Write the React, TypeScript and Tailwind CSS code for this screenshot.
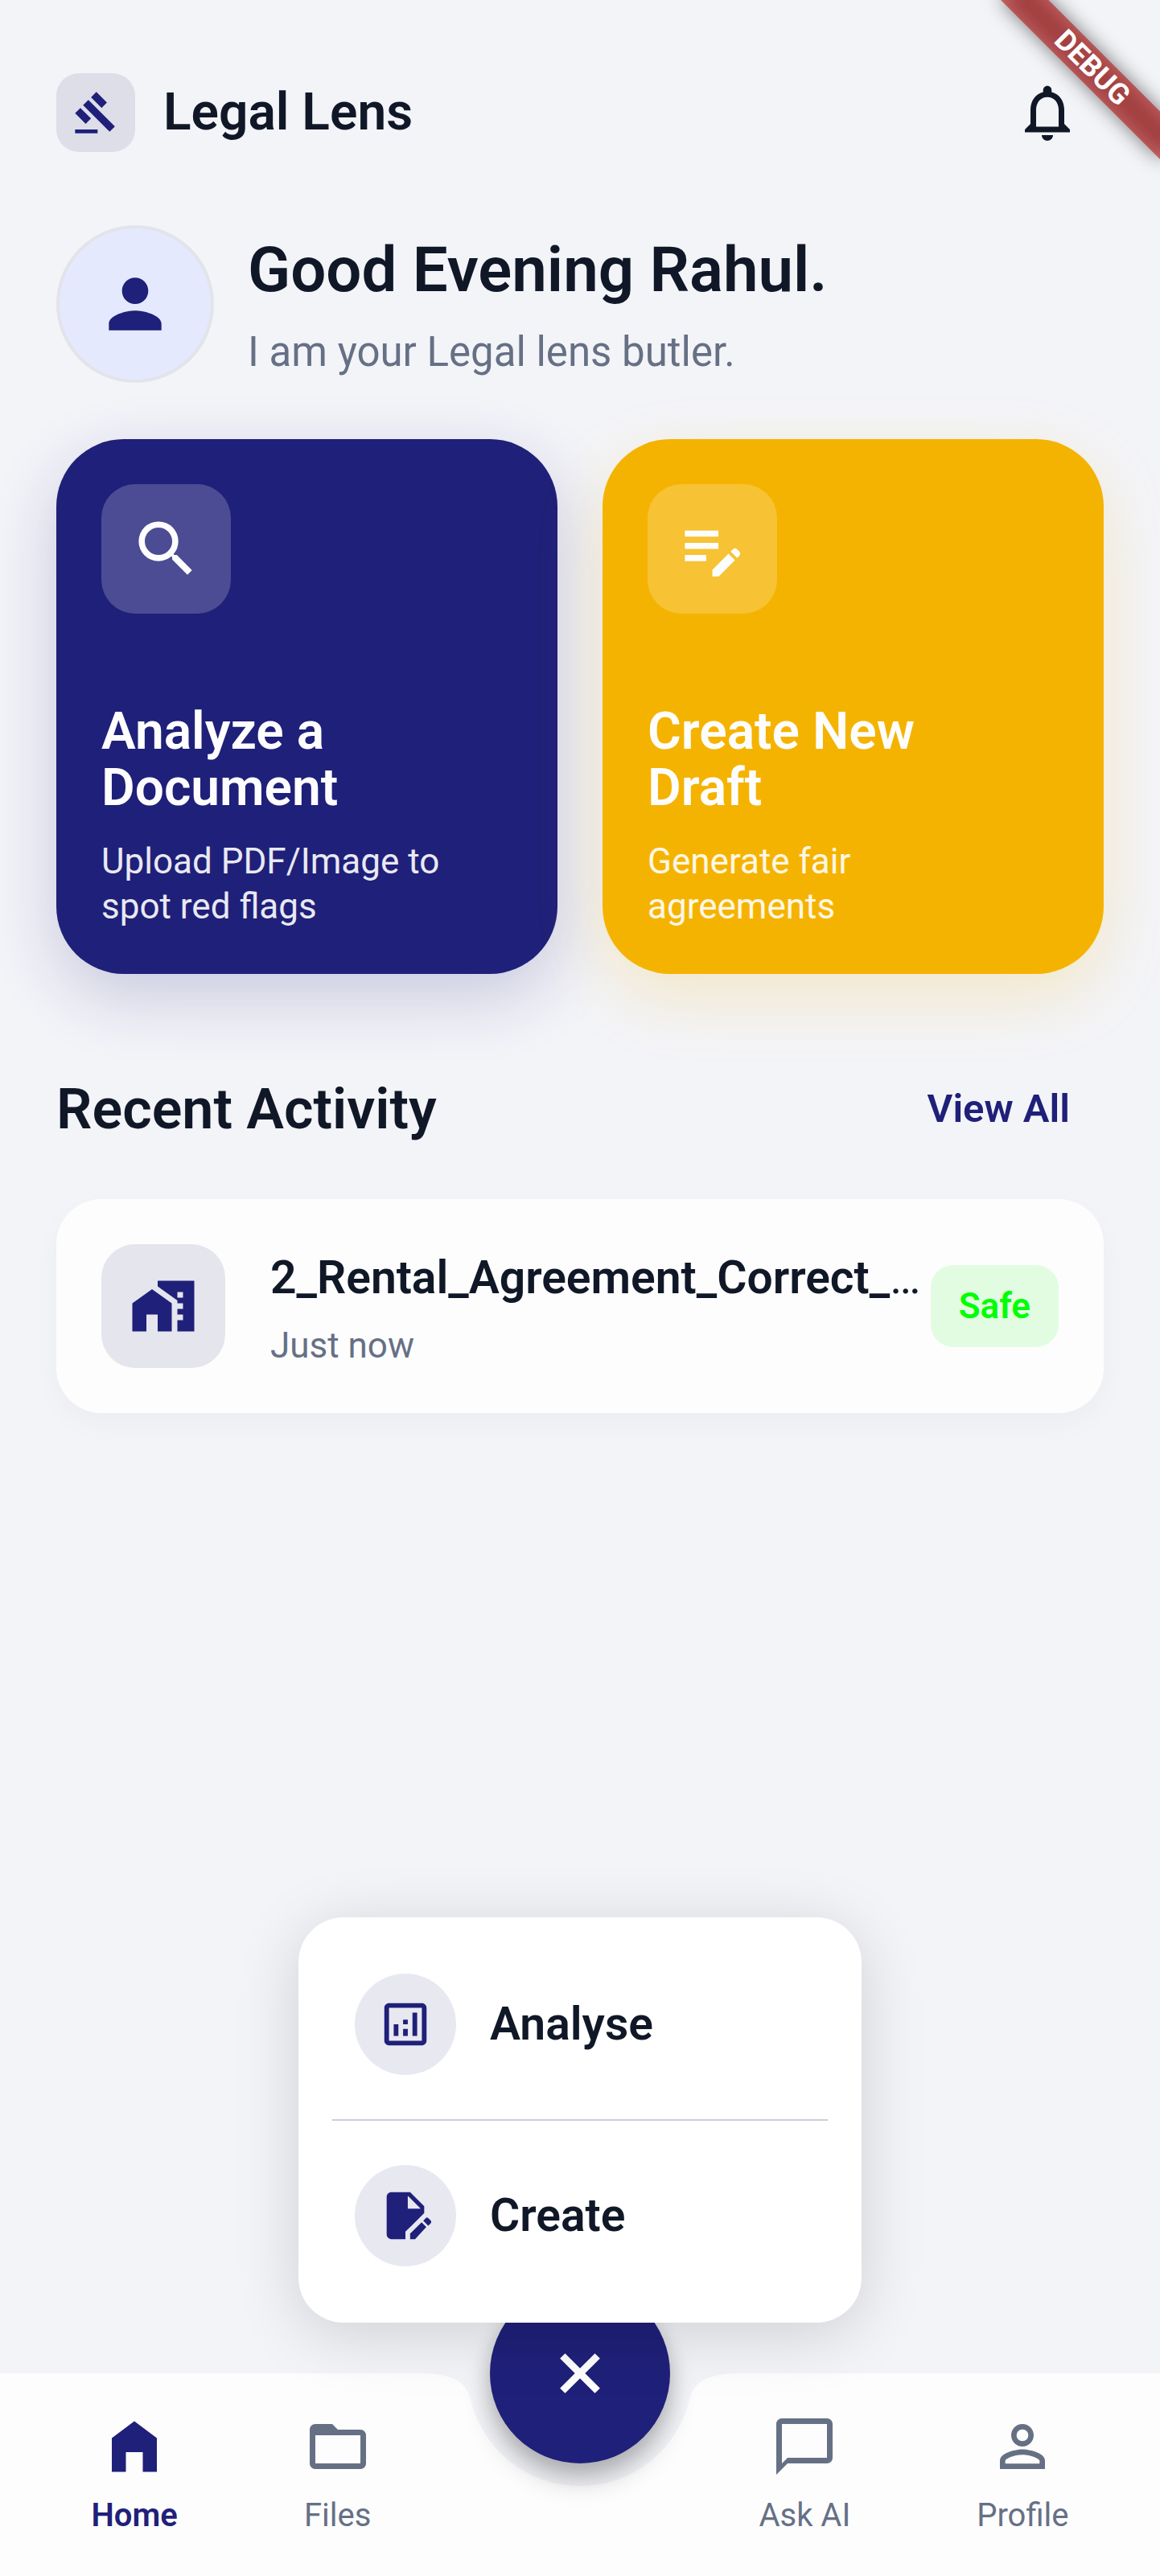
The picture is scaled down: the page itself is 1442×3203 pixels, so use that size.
import React, { useState } from 'react';
import type { IconType } from 'react-icons';
import {
    MdAdd,
    MdChatBubbleOutline,
    MdEditNote,
    MdFolderOpen,
    MdHomeWork,
    MdNotificationsNone,
    MdOutlineAnalytics,
    MdPerson,
    MdPersonOutline,
    MdSearch,
} from 'react-icons/md';

interface IconProps {
    className?: string;
}

const GavelIcon: React.FC<IconProps> = ({ className }) => (
    <svg viewBox="0 0 24 24" fill="currentColor" className={className} aria-hidden="true">
        <path d="M1 21h12v2H1zM5.245 8.07l2.83-2.827 14.14 14.142-2.828 2.828zM12.317 1l5.657 5.656-2.83 2.83-5.654-5.66zM3.825 9.485l5.657 5.657-2.828 2.828-5.657-5.657z" />
    </svg>
);

const HomeIcon: React.FC<IconProps> = ({ className }) => (
    <svg viewBox="0 0 24 24" fill="currentColor" className={className} aria-hidden="true">
        <path d="M12 3 4 9v12h5v-7h6v7h5V9z" />
    </svg>
);

const CloseIcon: React.FC<IconProps> = ({ className }) => (
    <svg viewBox="0 0 24 24" fill="currentColor" className={className} aria-hidden="true">
        <path d="M6.7 4.9 12 10.2l5.3-5.3 1.8 1.8-5.3 5.3 5.3 5.3-1.8 1.8-5.3-5.3-5.3 5.3-1.8-1.8 5.3-5.3-5.3-5.3z" />
    </svg>
);

const EditDocumentIcon: React.FC<IconProps> = ({ className }) => (
    <svg viewBox="0 0 24 24" fill="currentColor" className={className} aria-hidden="true">
        <path d="M14 2H6c-1.1 0-2 .9-2 2v16c0 1.1.9 2 2 2h6v-3.2l8-7.9V8l-6-6zm-1 7V3.5L18.5 9H13z" />
        <path d="M14 22v-2.4l4.9-4.8 2 2L16.1 22zM19.6 14.1l1-1c.4-.4.9-.4 1.2 0l.9.9c.4.4.4.9 0 1.3l-1 1z" />
    </svg>
);

interface ActionCardProps {
    icon: IconType;
    title: [string, string];
    text: [string, string];
    className: string;
}

const ActionCard: React.FC<ActionCardProps> = ({ icon: Icon, title, text, className }) => (
    <button
        type="button"
        className={`flex h-[665px] flex-1 flex-col justify-between rounded-[84px] p-14 text-left text-[#fdfdfd] ${className}`}
    >
        <span className="flex size-[161px] items-center justify-center rounded-[42px] bg-white/20">
            <Icon className="size-[91px]" />
        </span>
        <span className="flex flex-col gap-7">
            <span className="text-[64px] leading-[70px] font-semibold">
                {title[0]}
                <br />
                {title[1]}
            </span>
            <span className="text-[44px] leading-[56px] text-white/90">
                {text[0]}
                <br />
                {text[1]}
            </span>
        </span>
    </button>
);

interface MenuItemProps {
    icon: React.ComponentType<IconProps>;
    label: string;
}

const MenuItem: React.FC<MenuItemProps> = ({ icon: Icon, label }) => (
    <button type="button" role="menuitem" className="flex w-full items-center gap-[42px] px-[70px] py-[42px]">
        <span className="flex size-[126px] items-center justify-center rounded-full bg-[#e8e8f1] text-[#1f2079]">
            <Icon className="size-[70px]" />
        </span>
        <span className="text-[57px] leading-[84px] font-semibold">{label}</span>
    </button>
);

interface NavItemProps {
    icon: React.ComponentType<IconProps>;
    label: string;
    active?: boolean;
}

const NavItem: React.FC<NavItemProps> = ({ icon: Icon, label, active }) => (
    <a
        href="#"
        aria-current={active ? 'page' : undefined}
        className={`flex flex-col items-center gap-4 ${
            active ? 'font-semibold text-[#1f2079]' : 'text-[#667085]'
        }`}
    >
        <Icon className="size-[84px]" />
        <span className="text-[40px] leading-[56px]">{label}</span>
    </a>
);

const BottomNav: React.FC = () => {
    const [open, setOpen] = useState(true);

    return (
        <nav className="relative h-[252px]">
            {/* Bar background with the notch for the button */}
            <div className="absolute inset-0 flex">
                <div className="flex-1 bg-[#fdfdfd]" />
                <svg viewBox="0 0 392 252" className="h-[252px] w-[392px] text-[#fdfdfd]" aria-hidden="true">
                    <path
                        fill="currentColor"
                        d="M0 0Q52.5 0 59.4 30.7A140 140 0 0 0 332.6 30.7Q339.5 0 392 0V252H0z"
                    />
                </svg>
                <div className="flex-1 bg-[#fdfdfd]" />
            </div>

            <div className="relative flex items-start justify-around px-[35px] pt-[49px]">
                <NavItem icon={HomeIcon} label="Home" active />
                <NavItem icon={MdFolderOpen} label="Files" />
                <div className="w-[168px]" />
                <NavItem icon={MdChatBubbleOutline} label="Ask AI" />
                <NavItem icon={MdPersonOutline} label="Profile" />
            </div>

            <button
                type="button"
                aria-label={open ? 'Close menu' : 'Open menu'}
                aria-expanded={open}
                onClick={() => setOpen(!open)}
                className="absolute top-0 left-1/2 flex size-[224px] -translate-x-1/2 -translate-y-1/2 items-center justify-center rounded-full bg-[#1f2079] text-[#fdfdfd] shadow-[0_21px_35px_rgba(0,0,0,0.2),0_10px_24px_rgba(0,0,0,0.14)]"
            >
                {open ? <CloseIcon className="size-[84px]" /> : <MdAdd className="size-[84px]" />}
            </button>

            {open && (
                <div
                    role="menu"
                    className="absolute bottom-full left-1/2 mb-[63px] w-[700px] -translate-x-1/2 rounded-[56px] bg-white py-7 shadow-[0_14px_80px_rgba(0,0,0,0.15)]"
                >
                    <MenuItem icon={MdOutlineAnalytics} label="Analyse" />
                    <div className="flex h-7 items-center px-[42px]">
                        <hr className="w-full border-t-2 border-[#cfccd6]" />
                    </div>
                    <MenuItem icon={EditDocumentIcon} label="Create" />
                </div>
            )}
        </nav>
    );
};

const DebugBanner: React.FC = () => (
    <div className="pointer-events-none absolute top-[98px] right-[-140px] h-[42px] w-[280px] origin-[50%_-98px] rotate-45">
        <div className="absolute inset-0 bg-black/50 blur-[12px]" />
        <div className="relative flex h-full items-center justify-center bg-[#b71c1c]/63 text-[36px] leading-[42px] font-bold text-white">
            DEBUG
        </div>
    </div>
);

export default function App() {
    return (
        <div className="relative flex min-h-screen flex-col overflow-hidden bg-[#f3f4f8] font-['Roboto',sans-serif] text-[#101828]">
            <header className="flex items-center px-[70px] pt-[70px]">
                <div className="flex size-[98px] items-center justify-center rounded-[28px] bg-[#dedee9] text-[#1f2079]">
                    <GavelIcon className="size-[56px]" />
                </div>
                <h1 className="ml-[35px] text-[64px] leading-[84px] font-semibold">Legal Lens</h1>
                <button
                    type="button"
                    aria-label="Notifications"
                    className="ml-auto flex size-[140px] items-center justify-center"
                >
                    <MdNotificationsNone className="size-[84px]" />
                </button>
            </header>

            <main className="flex flex-1 flex-col px-[70px] pt-[70px]">
                <section className="flex items-center gap-[42px]">
                    <div className="flex size-[196px] items-center justify-center rounded-full border-4 border-[#e2e4e9] bg-[#e4e9fd] text-[#1f2079]">
                        <MdPerson className="size-[98px]" />
                    </div>
                    <div className="flex flex-col gap-[14px]">
                        <h2 className="text-[78px] leading-[106px] font-semibold">Good Evening Rahul.</h2>
                        <p className="text-[51px] leading-[70px] text-[#667085]">I am your Legal lens butler.</p>
                    </div>
                </section>

                <section className="mt-[70px] flex gap-14">
                    <ActionCard
                        icon={MdSearch}
                        title={['Analyze a', 'Document']}
                        text={['Upload PDF/Image to', 'spot red flags']}
                        className="bg-[#1f2079] shadow-[0_28px_84px_rgba(31,32,121,0.2)]"
                    />
                    <ActionCard
                        icon={MdEditNote}
                        title={['Create New', 'Draft']}
                        text={['Generate fair', 'agreements']}
                        className="bg-[#f5b301] shadow-[0_28px_84px_rgba(245,179,1,0.2)]"
                    />
                </section>

                <section className="mt-[84px]">
                    <div className="flex h-[168px] items-center justify-between">
                        <h2 className="text-[70px] leading-[98px] font-semibold">Recent Activity</h2>
                        <a href="#" className="px-[42px] text-[49px] leading-[70px] font-semibold text-[#1f2079]">
                            View All
                        </a>
                    </div>

                    <article className="mt-7 flex items-center rounded-[56px] bg-[#fdfdfd] p-14 shadow-[0_14px_35px_rgba(0,0,0,0.03)]">
                        <div className="flex size-[154px] shrink-0 items-center justify-center rounded-[42px] bg-[#e5e5ee] text-[#1f2079]">
                            <MdHomeWork className="size-[84px]" />
                        </div>
                        <div className="ml-14 flex min-w-0 flex-1 flex-col gap-[14px]">
                            <h3 className="text-[57px] leading-[84px] whitespace-nowrap">
                                <span className="font-semibold">2_Rental_Agreement_Correct_</span>…
                            </h3>
                            <p className="text-[44px] leading-[56px] text-[#667085]">Just now</p>
                        </div>
                        <span className="shrink-0 rounded-[28px] bg-[#e2fce2] px-[35px] py-[21px] text-[44px] leading-[60px] font-semibold text-[#00ff00]">
                            Safe
                        </span>
                    </article>
                </section>
            </main>

            <BottomNav />
            <DebugBanner />
        </div>
    );
}
